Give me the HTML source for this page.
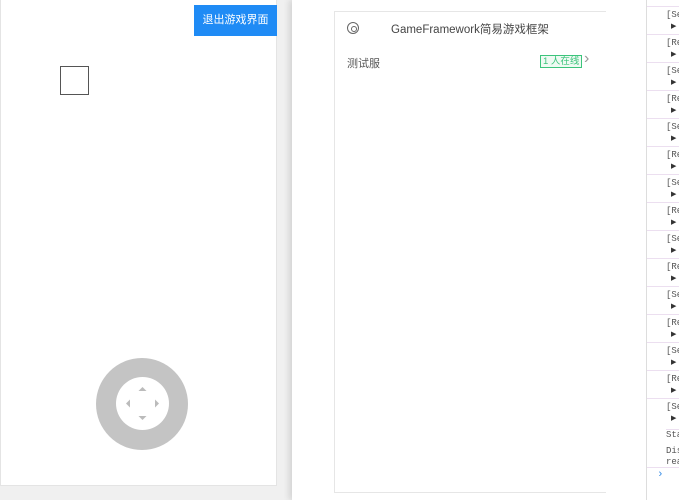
<!DOCTYPE html>
<html><head><meta charset="utf-8"><style>
*{margin:0;padding:0;box-sizing:border-box}
body{width:679px;height:500px;overflow:hidden;background:#f0f0f0;font-family:"Liberation Sans","Noto Sans CJK SC",sans-serif;position:relative}
.left{position:absolute;left:0;top:0;width:277px;height:486px;background:#fff;border:1px solid #e4e4e4;border-top:none}
.btn{position:absolute;left:193px;top:5px;width:83px;height:31px;background:#1f8bf5;color:#fff;font-size:11px;line-height:31px;text-align:center}
.sq{position:absolute;left:59px;top:66px;width:29px;height:29px;border:1px solid #555}
.joy{position:absolute;left:95px;top:358px;width:92px;height:92px;border-radius:50%;background:#c4c4c4}
.joy .in{position:absolute;left:20px;top:19px;width:53px;height:53px;border-radius:50%;background:#fff}
.right{position:absolute;left:292px;top:0;width:354px;height:500px;background:#fff;box-shadow:-3px 0 6px rgba(0,0,0,.12)}
.card{position:absolute;left:42px;top:11px;width:272px;height:482px;border:1px solid #e6e6e6;border-right:none}
.title{position:absolute;left:56px;top:9px;font-size:11.5px;color:#444}
.ic{position:absolute;left:12px;top:10px;width:12px;height:12px;border:1.5px solid #666;border-radius:50%}
.ic:after{content:"";position:absolute;left:2.5px;top:2.5px;width:4px;height:4px;border:1px solid #666;border-radius:50%}
.srv{position:absolute;left:12px;top:43px;font-size:11px;color:#555}
.tag{position:absolute;left:205px;top:43px;height:13px;border:1px solid #3cc47c;color:#3cc47c;font-size:9.5px;line-height:11px;padding:0 2px;background:#effaf3}
.arr{position:absolute;left:249px;top:38px;color:#999;font-size:16px}
.con{position:absolute;left:646px;top:0;width:33px;height:500px;background:#fff;border-left:1px solid #ddd;font-family:"Liberation Mono",monospace;font-size:9px;color:#555}
.e{position:absolute;left:0;width:33px;height:28px;border-top:1px solid #ecdff0}
.e span{position:absolute;left:19px;top:3px}
.e b{position:absolute;left:24px;top:15px;font-size:7px;font-weight:normal;color:#333}
</style></head><body>
<div class="left">
<div class="btn">退出游戏界面</div>
<div class="sq"></div>
<div class="joy"><div class="in">
<svg width="53" height="53" style="position:absolute;left:0;top:0" fill="#bbb"><path d="M26.5 10l4 4h-8z"/><path d="M26.5 43l4-4h-8z"/><path d="M10 26.5l4-4v8z"/><path d="M43 26.5l-4-4v8z"/></svg>
</div></div>
</div>
<div class="right"><div class="card">
<div class="ic"></div>
<div class="title">GameFramework简易游戏框架</div>
<div class="srv">测试服</div>
<div class="tag">1 人在线</div>
<div class="arr">&#x203A;</div>
</div></div>
<div class="con">
<div class="e" style="top:6px"><span>[Se</span><b>▶</b></div>
<div class="e" style="top:34px"><span>[Re</span><b>▶</b></div>
<div class="e" style="top:62px"><span>[Se</span><b>▶</b></div>
<div class="e" style="top:90px"><span>[Re</span><b>▶</b></div>
<div class="e" style="top:118px"><span>[Se</span><b>▶</b></div>
<div class="e" style="top:146px"><span>[Re</span><b>▶</b></div>
<div class="e" style="top:174px"><span>[Se</span><b>▶</b></div>
<div class="e" style="top:202px"><span>[Re</span><b>▶</b></div>
<div class="e" style="top:230px"><span>[Se</span><b>▶</b></div>
<div class="e" style="top:258px"><span>[Re</span><b>▶</b></div>
<div class="e" style="top:286px"><span>[Se</span><b>▶</b></div>
<div class="e" style="top:314px"><span>[Re</span><b>▶</b></div>
<div class="e" style="top:342px"><span>[Se</span><b>▶</b></div>
<div class="e" style="top:370px"><span>[Re</span><b>▶</b></div>
<div class="e" style="top:398px"><span>[Se</span><b>▶</b></div>
<div style="position:absolute;left:19px;top:429px;border-top:1px solid #ecdff0;width:14px"></div>
<div style="position:absolute;left:19px;top:430px">Sta</div>
<div style="position:absolute;left:19px;top:446px">Dis</div>
<div style="position:absolute;left:19px;top:457px">rea</div>
<div style="position:absolute;left:0;top:467px;width:33px;border-top:1px solid #ecdff0"></div>
<div style="position:absolute;left:10px;top:469px;color:#3a8ee6;font-size:11px">›</div>
</div>
</body></html>
